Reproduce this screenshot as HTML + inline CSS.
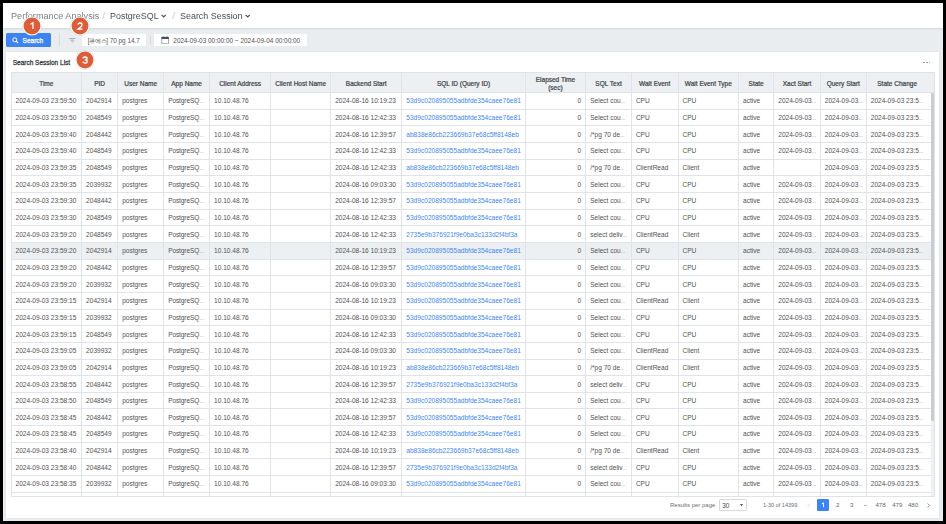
<!DOCTYPE html><html><head><meta charset="utf-8"><style>
*{margin:0;padding:0;box-sizing:border-box}
html,body{width:946px;height:524px;overflow:hidden;background:#000}
body{position:relative;font-family:"Liberation Sans",sans-serif;color:#444}
.a{position:absolute;white-space:nowrap}
#frame{position:absolute;left:3px;top:3px;width:940px;height:518px;background:#e9edf0;overflow:hidden}
#hdr{position:absolute;left:3px;top:3px;width:940px;height:24.8px;background:#fff;box-shadow:0 0.8px 2px rgba(0,0,0,.09)}
.bc{font-size:9.7px;top:10.6px;line-height:10px;transform-origin:0 50%}
.btn{left:6px;top:33.2px;width:45px;height:13.9px;background:#3e84f0;border-radius:1.5px;color:#fff}
.inp{background:#fff;border-radius:1px}
#card{position:absolute;left:5.7px;top:51.5px;width:933.7px;height:466.2px;background:#fff;box-shadow:0 0 1px rgba(0,0,0,.12)}
.hl{background:#e0e3e7}
.th{background:#edf0f3}
.ht{font-size:6.5px;color:#3a3d42;text-align:center;line-height:7.6px;-webkit-text-stroke:0.2px #3a3d42}
.td{font-size:6.55px;color:#525252;line-height:8px}
.el{font-size:4.6px;letter-spacing:-0.2px}
.lk{color:#4187ef;font-size:6.58px}
.badge{width:19.6px;height:19.6px;border-radius:50%;background:#db5e3b;background-clip:padding-box;border:1.5px solid #fff;box-shadow:0.4px 0.7px 1.3px rgba(0,0,0,.3);color:#fff;font-weight:bold;font-size:10.2px;text-align:center;line-height:19.2px}
</style></head><body>
<div id="frame"></div>
<div id="hdr"></div>

<div class="a bc" style="left:10.8px;color:#7b8087;transform:scaleX(0.943)">Performance Analysis</div>
<div class="a bc" style="left:102.3px;color:#c3c7cc">/</div>
<div class="a bc" style="left:110.3px;color:#4a4e55;transform:scaleX(0.922)">PostgreSQL</div>
<svg class="a" style="left:161px;top:14.2px" width="5.4" height="4" viewBox="0 0 5.4 4"><path d="M0.6 0.8 L2.7 2.9 L4.8 0.8" fill="none" stroke="#4a4e55" stroke-width="1.15"/></svg>
<div class="a bc" style="left:172.2px;color:#c3c7cc">/</div>
<div class="a bc" style="left:180.3px;color:#4a4e55;transform:scaleX(0.922)">Search Session</div>
<svg class="a" style="left:244.9px;top:14.2px" width="5.4" height="4" viewBox="0 0 5.4 4"><path d="M0.6 0.8 L2.7 2.9 L4.8 0.8" fill="none" stroke="#4a4e55" stroke-width="1.15"/></svg>
<div class="a btn"></div>
<svg class="a" style="left:12px;top:36.6px" width="7" height="7" viewBox="0 0 7 7"><circle cx="2.8" cy="2.8" r="2" fill="none" stroke="#fff" stroke-width="1"/><path d="M4.2 4.2 L6.2 6.2" stroke="#fff" stroke-width="1.1"/></svg>
<div class="a" style="left:22.6px;top:36.8px;font-size:6.5px;color:#fff;line-height:8px;-webkit-text-stroke:0.25px #fff">Search</div>
<div class="a" style="left:58.9px;top:33.2px;width:0.7px;height:12.8px;background:#d9dce0"></div>
<svg class="a" style="left:69px;top:37.8px" width="7" height="5" viewBox="0 0 7 5"><path d="M0.3 0.5H6.5M1.5 2.2H5.3M2.6 3.9H4.2" stroke="#8d9197" stroke-width="0.65"/></svg>
<div class="a inp" style="left:82px;top:34.4px;width:64px;height:11.4px"></div>
<div class="a" style="left:87.8px;top:36.7px;font-size:6.4px;color:#555;line-height:8px"><span style="letter-spacing:-0.3px">[큐에스]</span> 70 pg 14.7</div>
<div class="a" style="left:149.8px;top:36px;width:0.8px;height:8.5px;background:#d6d9dd"></div>
<div class="a inp" style="left:154px;top:34.4px;width:152.7px;height:11.3px"></div>
<svg class="a" style="left:161.4px;top:36.1px" width="8.4" height="8.4" viewBox="0 0 8.4 8.4"><rect x="0.75" y="1.2" width="6.8" height="6.6" rx="0.6" fill="none" stroke="#70747a" stroke-width="0.65"/><rect x="0.45" y="0.9" width="7.4" height="2.1" rx="0.4" fill="#4a4e56"/><path d="M2.2 0.4V1.4M6.1 0.4V1.4" stroke="#4a4e56" stroke-width="0.8"/></svg>
<div class="a" style="left:173.3px;top:37px;font-size:6.45px;color:#505050;line-height:8px">2024-09-03 00:00:00 ~ 2024-09-04 00:00:00</div>
<div id="card"></div>
<div class="a" style="left:12.7px;top:59.2px;font-size:6.5px;color:#3a3d42;line-height:8px;-webkit-text-stroke:0.28px #3a3d42">Search Session List</div>
<div class="a" style="left:923.2px;top:61.65px;width:1.6px;height:1.6px;border-radius:50%;background:#8d939b"></div>
<div class="a" style="left:926.0500000000001px;top:61.65px;width:1.6px;height:1.6px;border-radius:50%;background:#8d939b"></div>
<div class="a" style="left:928.9000000000001px;top:61.65px;width:1.6px;height:1.6px;border-radius:50%;background:#8d939b"></div>
<div class="a th" style="left:11px;top:72.1px;width:923px;height:20.400000000000006px"></div>
<div class="a th" style="left:11px;top:242.35px;width:923px;height:16.65px"></div>
<div class="a hl" style="left:11px;top:72.1px;width:923px;height:0.8px"></div>
<div class="a hl" style="left:11px;top:92.1px;width:923px;height:0.8px"></div>
<div class="a hl" style="left:11px;top:108.75px;width:923px;height:0.8px"></div>
<div class="a hl" style="left:11px;top:125.40px;width:923px;height:0.8px"></div>
<div class="a hl" style="left:11px;top:142.05px;width:923px;height:0.8px"></div>
<div class="a hl" style="left:11px;top:158.70px;width:923px;height:0.8px"></div>
<div class="a hl" style="left:11px;top:175.35px;width:923px;height:0.8px"></div>
<div class="a hl" style="left:11px;top:192.00px;width:923px;height:0.8px"></div>
<div class="a hl" style="left:11px;top:208.65px;width:923px;height:0.8px"></div>
<div class="a hl" style="left:11px;top:225.30px;width:923px;height:0.8px"></div>
<div class="a hl" style="left:11px;top:241.95px;width:923px;height:0.8px"></div>
<div class="a hl" style="left:11px;top:258.60px;width:923px;height:0.8px"></div>
<div class="a hl" style="left:11px;top:275.25px;width:923px;height:0.8px"></div>
<div class="a hl" style="left:11px;top:291.90px;width:923px;height:0.8px"></div>
<div class="a hl" style="left:11px;top:308.55px;width:923px;height:0.8px"></div>
<div class="a hl" style="left:11px;top:325.20px;width:923px;height:0.8px"></div>
<div class="a hl" style="left:11px;top:341.85px;width:923px;height:0.8px"></div>
<div class="a hl" style="left:11px;top:358.50px;width:923px;height:0.8px"></div>
<div class="a hl" style="left:11px;top:375.15px;width:923px;height:0.8px"></div>
<div class="a hl" style="left:11px;top:391.80px;width:923px;height:0.8px"></div>
<div class="a hl" style="left:11px;top:408.45px;width:923px;height:0.8px"></div>
<div class="a hl" style="left:11px;top:425.10px;width:923px;height:0.8px"></div>
<div class="a hl" style="left:11px;top:441.75px;width:923px;height:0.8px"></div>
<div class="a hl" style="left:11px;top:458.40px;width:923px;height:0.8px"></div>
<div class="a hl" style="left:11px;top:475.05px;width:923px;height:0.8px"></div>
<div class="a hl" style="left:11px;top:491.70px;width:923px;height:0.8px"></div>
<div class="a hl" style="left:11px;top:496.20000000000005px;width:923px;height:0.8px"></div>
<div class="a hl" style="left:10.60px;top:72.1px;width:0.8px;height:424.5px"></div>
<div class="a hl" style="left:81.20px;top:72.1px;width:0.8px;height:424.5px"></div>
<div class="a hl" style="left:117.30px;top:72.1px;width:0.8px;height:424.5px"></div>
<div class="a hl" style="left:163.30px;top:72.1px;width:0.8px;height:424.5px"></div>
<div class="a hl" style="left:209.20px;top:72.1px;width:0.8px;height:424.5px"></div>
<div class="a hl" style="left:270.30px;top:72.1px;width:0.8px;height:424.5px"></div>
<div class="a hl" style="left:330.30px;top:72.1px;width:0.8px;height:424.5px"></div>
<div class="a hl" style="left:401.40px;top:72.1px;width:0.8px;height:424.5px"></div>
<div class="a hl" style="left:524.80px;top:72.1px;width:0.8px;height:424.5px"></div>
<div class="a hl" style="left:585.30px;top:72.1px;width:0.8px;height:424.5px"></div>
<div class="a hl" style="left:631.00px;top:72.1px;width:0.8px;height:424.5px"></div>
<div class="a hl" style="left:677.60px;top:72.1px;width:0.8px;height:424.5px"></div>
<div class="a hl" style="left:738.20px;top:72.1px;width:0.8px;height:424.5px"></div>
<div class="a hl" style="left:773.35px;top:72.1px;width:0.8px;height:424.5px"></div>
<div class="a hl" style="left:819.90px;top:72.1px;width:0.8px;height:424.5px"></div>
<div class="a hl" style="left:865.90px;top:72.1px;width:0.8px;height:424.5px"></div>
<div class="a hl" style="left:933.60px;top:72.1px;width:0.8px;height:424.5px"></div>
<div class="a ht" style="left:11px;top:79.80px;width:70.6px">Time</div>
<div class="a ht" style="left:81.6px;top:79.80px;width:36.10000000000001px">PID</div>
<div class="a ht" style="left:117.7px;top:79.80px;width:45.999999999999986px">User Name</div>
<div class="a ht" style="left:163.7px;top:79.80px;width:45.900000000000006px">App Name</div>
<div class="a ht" style="left:209.6px;top:79.80px;width:61.099999999999994px">Client Address</div>
<div class="a ht" style="left:270.7px;top:79.80px;width:60.0px">Client Host Name</div>
<div class="a ht" style="left:330.7px;top:79.80px;width:71.10000000000002px">Backend Start</div>
<div class="a ht" style="left:401.8px;top:79.80px;width:123.40000000000003px">SQL ID (Query ID)</div>
<div class="a ht" style="left:525.2px;top:76.00px;width:60.5px">Elapsed Time<br>(sec)</div>
<div class="a ht" style="left:585.7px;top:79.80px;width:45.69999999999993px">SQL Text</div>
<div class="a ht" style="left:631.4px;top:79.80px;width:46.60000000000002px">Wait Event</div>
<div class="a ht" style="left:678px;top:79.80px;width:60.60000000000002px">Wait Event Type</div>
<div class="a ht" style="left:738.6px;top:79.80px;width:35.14999999999998px">State</div>
<div class="a ht" style="left:773.75px;top:79.80px;width:46.549999999999955px">Xact Start</div>
<div class="a ht" style="left:820.3px;top:79.80px;width:46.0px">Query Start</div>
<div class="a ht" style="left:866.3px;top:79.80px;width:61.700000000000045px">State Change</div>
<div class="a td" style="left:15.5px;top:97.48px">2024-09-03 23:59:50</div>
<div class="a td" style="left:86.1px;top:97.48px">2042914</div>
<div class="a td" style="left:122.2px;top:97.48px">postgres</div>
<div class="a td" style="left:168.2px;top:97.48px;letter-spacing:-0.12px">PostgreSQ<span class="el">…</span></div>
<div class="a td" style="left:214.1px;top:97.48px">10.10.48.76</div>
<div class="a td" style="left:335.2px;top:97.48px">2024-08-16 10:19:23</div>
<div class="a td lk" style="left:406.3px;top:97.48px">53d9c020895055adbfde354caee76e81</div>
<div class="a td" style="left:525.2px;top:97.48px;width:56.0px;text-align:right">0</div>
<div class="a td" style="left:590.2px;top:97.48px">Select cou<span class="el">…</span></div>
<div class="a td" style="left:635.9px;top:97.48px">CPU</div>
<div class="a td" style="left:682.5px;top:97.48px">CPU</div>
<div class="a td" style="left:743.1px;top:97.48px">active</div>
<div class="a td" style="left:778.25px;top:97.48px">2024-09-03<span class="el">…</span></div>
<div class="a td" style="left:824.8px;top:97.48px">2024-09-03<span class="el">…</span></div>
<div class="a td" style="left:870.8px;top:97.48px">2024-09-03 23:5<span class="el">…</span></div>
<div class="a td" style="left:15.5px;top:114.13px">2024-09-03 23:59:50</div>
<div class="a td" style="left:86.1px;top:114.13px">2048549</div>
<div class="a td" style="left:122.2px;top:114.13px">postgres</div>
<div class="a td" style="left:168.2px;top:114.13px;letter-spacing:-0.12px">PostgreSQ<span class="el">…</span></div>
<div class="a td" style="left:214.1px;top:114.13px">10.10.48.76</div>
<div class="a td" style="left:335.2px;top:114.13px">2024-08-16 12:42:33</div>
<div class="a td lk" style="left:406.3px;top:114.13px">53d9c020895055adbfde354caee76e81</div>
<div class="a td" style="left:525.2px;top:114.13px;width:56.0px;text-align:right">0</div>
<div class="a td" style="left:590.2px;top:114.13px">Select cou<span class="el">…</span></div>
<div class="a td" style="left:635.9px;top:114.13px">CPU</div>
<div class="a td" style="left:682.5px;top:114.13px">CPU</div>
<div class="a td" style="left:743.1px;top:114.13px">active</div>
<div class="a td" style="left:778.25px;top:114.13px">2024-09-03<span class="el">…</span></div>
<div class="a td" style="left:824.8px;top:114.13px">2024-09-03<span class="el">…</span></div>
<div class="a td" style="left:870.8px;top:114.13px">2024-09-03 23:5<span class="el">…</span></div>
<div class="a td" style="left:15.5px;top:130.78px">2024-09-03 23:59:40</div>
<div class="a td" style="left:86.1px;top:130.78px">2048442</div>
<div class="a td" style="left:122.2px;top:130.78px">postgres</div>
<div class="a td" style="left:168.2px;top:130.78px;letter-spacing:-0.12px">PostgreSQ<span class="el">…</span></div>
<div class="a td" style="left:214.1px;top:130.78px">10.10.48.76</div>
<div class="a td" style="left:335.2px;top:130.78px">2024-08-16 12:39:57</div>
<div class="a td lk" style="left:406.3px;top:130.78px">ab838e86cb223669b37e68c5ff8148eb</div>
<div class="a td" style="left:525.2px;top:130.78px;width:56.0px;text-align:right">0</div>
<div class="a td" style="left:590.2px;top:130.78px">/*pg 70 de<span class="el">…</span></div>
<div class="a td" style="left:635.9px;top:130.78px">CPU</div>
<div class="a td" style="left:682.5px;top:130.78px">CPU</div>
<div class="a td" style="left:743.1px;top:130.78px">active</div>
<div class="a td" style="left:778.25px;top:130.78px">2024-09-03<span class="el">…</span></div>
<div class="a td" style="left:824.8px;top:130.78px">2024-09-03<span class="el">…</span></div>
<div class="a td" style="left:870.8px;top:130.78px">2024-09-03 23:5<span class="el">…</span></div>
<div class="a td" style="left:15.5px;top:147.42px">2024-09-03 23:59:40</div>
<div class="a td" style="left:86.1px;top:147.42px">2048549</div>
<div class="a td" style="left:122.2px;top:147.42px">postgres</div>
<div class="a td" style="left:168.2px;top:147.42px;letter-spacing:-0.12px">PostgreSQ<span class="el">…</span></div>
<div class="a td" style="left:214.1px;top:147.42px">10.10.48.76</div>
<div class="a td" style="left:335.2px;top:147.42px">2024-08-16 12:42:33</div>
<div class="a td lk" style="left:406.3px;top:147.42px">53d9c020895055adbfde354caee76e81</div>
<div class="a td" style="left:525.2px;top:147.42px;width:56.0px;text-align:right">0</div>
<div class="a td" style="left:590.2px;top:147.42px">Select cou<span class="el">…</span></div>
<div class="a td" style="left:635.9px;top:147.42px">CPU</div>
<div class="a td" style="left:682.5px;top:147.42px">CPU</div>
<div class="a td" style="left:743.1px;top:147.42px">active</div>
<div class="a td" style="left:778.25px;top:147.42px">2024-09-03<span class="el">…</span></div>
<div class="a td" style="left:824.8px;top:147.42px">2024-09-03<span class="el">…</span></div>
<div class="a td" style="left:870.8px;top:147.42px">2024-09-03 23:5<span class="el">…</span></div>
<div class="a td" style="left:15.5px;top:164.07px">2024-09-03 23:59:35</div>
<div class="a td" style="left:86.1px;top:164.07px">2048549</div>
<div class="a td" style="left:122.2px;top:164.07px">postgres</div>
<div class="a td" style="left:168.2px;top:164.07px;letter-spacing:-0.12px">PostgreSQ<span class="el">…</span></div>
<div class="a td" style="left:214.1px;top:164.07px">10.10.48.76</div>
<div class="a td" style="left:335.2px;top:164.07px">2024-08-16 12:42:33</div>
<div class="a td lk" style="left:406.3px;top:164.07px">ab838e86cb223669b37e68c5ff8148eb</div>
<div class="a td" style="left:525.2px;top:164.07px;width:56.0px;text-align:right">0</div>
<div class="a td" style="left:590.2px;top:164.07px">/*pg 70 de<span class="el">…</span></div>
<div class="a td" style="left:635.9px;top:164.07px">ClientRead</div>
<div class="a td" style="left:682.5px;top:164.07px">Client</div>
<div class="a td" style="left:743.1px;top:164.07px">active</div>
<div class="a td" style="left:824.8px;top:164.07px">2024-09-03<span class="el">…</span></div>
<div class="a td" style="left:870.8px;top:164.07px">2024-09-03 23:5<span class="el">…</span></div>
<div class="a td" style="left:15.5px;top:180.72px">2024-09-03 23:59:35</div>
<div class="a td" style="left:86.1px;top:180.72px">2039932</div>
<div class="a td" style="left:122.2px;top:180.72px">postgres</div>
<div class="a td" style="left:168.2px;top:180.72px;letter-spacing:-0.12px">PostgreSQ<span class="el">…</span></div>
<div class="a td" style="left:214.1px;top:180.72px">10.10.48.76</div>
<div class="a td" style="left:335.2px;top:180.72px">2024-08-16 09:03:30</div>
<div class="a td lk" style="left:406.3px;top:180.72px">53d9c020895055adbfde354caee76e81</div>
<div class="a td" style="left:525.2px;top:180.72px;width:56.0px;text-align:right">0</div>
<div class="a td" style="left:590.2px;top:180.72px">Select cou<span class="el">…</span></div>
<div class="a td" style="left:635.9px;top:180.72px">CPU</div>
<div class="a td" style="left:682.5px;top:180.72px">CPU</div>
<div class="a td" style="left:743.1px;top:180.72px">active</div>
<div class="a td" style="left:778.25px;top:180.72px">2024-09-03<span class="el">…</span></div>
<div class="a td" style="left:824.8px;top:180.72px">2024-09-03<span class="el">…</span></div>
<div class="a td" style="left:870.8px;top:180.72px">2024-09-03 23:5<span class="el">…</span></div>
<div class="a td" style="left:15.5px;top:197.37px">2024-09-03 23:59:30</div>
<div class="a td" style="left:86.1px;top:197.37px">2048442</div>
<div class="a td" style="left:122.2px;top:197.37px">postgres</div>
<div class="a td" style="left:168.2px;top:197.37px;letter-spacing:-0.12px">PostgreSQ<span class="el">…</span></div>
<div class="a td" style="left:214.1px;top:197.37px">10.10.48.76</div>
<div class="a td" style="left:335.2px;top:197.37px">2024-08-16 12:39:57</div>
<div class="a td lk" style="left:406.3px;top:197.37px">53d9c020895055adbfde354caee76e81</div>
<div class="a td" style="left:525.2px;top:197.37px;width:56.0px;text-align:right">0</div>
<div class="a td" style="left:590.2px;top:197.37px">Select cou<span class="el">…</span></div>
<div class="a td" style="left:635.9px;top:197.37px">CPU</div>
<div class="a td" style="left:682.5px;top:197.37px">CPU</div>
<div class="a td" style="left:743.1px;top:197.37px">active</div>
<div class="a td" style="left:778.25px;top:197.37px">2024-09-03<span class="el">…</span></div>
<div class="a td" style="left:824.8px;top:197.37px">2024-09-03<span class="el">…</span></div>
<div class="a td" style="left:870.8px;top:197.37px">2024-09-03 23:5<span class="el">…</span></div>
<div class="a td" style="left:15.5px;top:214.02px">2024-09-03 23:59:30</div>
<div class="a td" style="left:86.1px;top:214.02px">2048549</div>
<div class="a td" style="left:122.2px;top:214.02px">postgres</div>
<div class="a td" style="left:168.2px;top:214.02px;letter-spacing:-0.12px">PostgreSQ<span class="el">…</span></div>
<div class="a td" style="left:214.1px;top:214.02px">10.10.48.76</div>
<div class="a td" style="left:335.2px;top:214.02px">2024-08-16 12:42:33</div>
<div class="a td lk" style="left:406.3px;top:214.02px">53d9c020895055adbfde354caee76e81</div>
<div class="a td" style="left:525.2px;top:214.02px;width:56.0px;text-align:right">0</div>
<div class="a td" style="left:590.2px;top:214.02px">Select cou<span class="el">…</span></div>
<div class="a td" style="left:635.9px;top:214.02px">CPU</div>
<div class="a td" style="left:682.5px;top:214.02px">CPU</div>
<div class="a td" style="left:743.1px;top:214.02px">active</div>
<div class="a td" style="left:778.25px;top:214.02px">2024-09-03<span class="el">…</span></div>
<div class="a td" style="left:824.8px;top:214.02px">2024-09-03<span class="el">…</span></div>
<div class="a td" style="left:870.8px;top:214.02px">2024-09-03 23:5<span class="el">…</span></div>
<div class="a td" style="left:15.5px;top:230.67px">2024-09-03 23:59:20</div>
<div class="a td" style="left:86.1px;top:230.67px">2048549</div>
<div class="a td" style="left:122.2px;top:230.67px">postgres</div>
<div class="a td" style="left:168.2px;top:230.67px;letter-spacing:-0.12px">PostgreSQ<span class="el">…</span></div>
<div class="a td" style="left:214.1px;top:230.67px">10.10.48.76</div>
<div class="a td" style="left:335.2px;top:230.67px">2024-08-16 12:42:33</div>
<div class="a td lk" style="left:406.3px;top:230.67px">2735e9b376921f9e0ba3c133d2f4bf3a</div>
<div class="a td" style="left:525.2px;top:230.67px;width:56.0px;text-align:right">0</div>
<div class="a td" style="left:590.2px;top:230.67px">select deliv<span class="el">…</span></div>
<div class="a td" style="left:635.9px;top:230.67px">ClientRead</div>
<div class="a td" style="left:682.5px;top:230.67px">Client</div>
<div class="a td" style="left:743.1px;top:230.67px">active</div>
<div class="a td" style="left:778.25px;top:230.67px">2024-09-03<span class="el">…</span></div>
<div class="a td" style="left:824.8px;top:230.67px">2024-09-03<span class="el">…</span></div>
<div class="a td" style="left:870.8px;top:230.67px">2024-09-03 23:5<span class="el">…</span></div>
<div class="a td" style="left:15.5px;top:247.32px">2024-09-03 23:59:20</div>
<div class="a td" style="left:86.1px;top:247.32px">2042914</div>
<div class="a td" style="left:122.2px;top:247.32px">postgres</div>
<div class="a td" style="left:168.2px;top:247.32px;letter-spacing:-0.12px">PostgreSQ<span class="el">…</span></div>
<div class="a td" style="left:214.1px;top:247.32px">10.10.48.76</div>
<div class="a td" style="left:335.2px;top:247.32px">2024-08-16 10:19:23</div>
<div class="a td lk" style="left:406.3px;top:247.32px">53d9c020895055adbfde354caee76e81</div>
<div class="a td" style="left:525.2px;top:247.32px;width:56.0px;text-align:right">0</div>
<div class="a td" style="left:590.2px;top:247.32px">Select cou<span class="el">…</span></div>
<div class="a td" style="left:635.9px;top:247.32px">CPU</div>
<div class="a td" style="left:682.5px;top:247.32px">CPU</div>
<div class="a td" style="left:743.1px;top:247.32px">active</div>
<div class="a td" style="left:778.25px;top:247.32px">2024-09-03<span class="el">…</span></div>
<div class="a td" style="left:824.8px;top:247.32px">2024-09-03<span class="el">…</span></div>
<div class="a td" style="left:870.8px;top:247.32px">2024-09-03 23:5<span class="el">…</span></div>
<div class="a td" style="left:15.5px;top:263.97px">2024-09-03 23:59:20</div>
<div class="a td" style="left:86.1px;top:263.97px">2048442</div>
<div class="a td" style="left:122.2px;top:263.97px">postgres</div>
<div class="a td" style="left:168.2px;top:263.97px;letter-spacing:-0.12px">PostgreSQ<span class="el">…</span></div>
<div class="a td" style="left:214.1px;top:263.97px">10.10.48.76</div>
<div class="a td" style="left:335.2px;top:263.97px">2024-08-16 12:39:57</div>
<div class="a td lk" style="left:406.3px;top:263.97px">53d9c020895055adbfde354caee76e81</div>
<div class="a td" style="left:525.2px;top:263.97px;width:56.0px;text-align:right">0</div>
<div class="a td" style="left:590.2px;top:263.97px">Select cou<span class="el">…</span></div>
<div class="a td" style="left:635.9px;top:263.97px">CPU</div>
<div class="a td" style="left:682.5px;top:263.97px">CPU</div>
<div class="a td" style="left:743.1px;top:263.97px">active</div>
<div class="a td" style="left:778.25px;top:263.97px">2024-09-03<span class="el">…</span></div>
<div class="a td" style="left:824.8px;top:263.97px">2024-09-03<span class="el">…</span></div>
<div class="a td" style="left:870.8px;top:263.97px">2024-09-03 23:5<span class="el">…</span></div>
<div class="a td" style="left:15.5px;top:280.62px">2024-09-03 23:59:20</div>
<div class="a td" style="left:86.1px;top:280.62px">2039932</div>
<div class="a td" style="left:122.2px;top:280.62px">postgres</div>
<div class="a td" style="left:168.2px;top:280.62px;letter-spacing:-0.12px">PostgreSQ<span class="el">…</span></div>
<div class="a td" style="left:214.1px;top:280.62px">10.10.48.76</div>
<div class="a td" style="left:335.2px;top:280.62px">2024-08-16 09:03:30</div>
<div class="a td lk" style="left:406.3px;top:280.62px">53d9c020895055adbfde354caee76e81</div>
<div class="a td" style="left:525.2px;top:280.62px;width:56.0px;text-align:right">0</div>
<div class="a td" style="left:590.2px;top:280.62px">Select cou<span class="el">…</span></div>
<div class="a td" style="left:635.9px;top:280.62px">CPU</div>
<div class="a td" style="left:682.5px;top:280.62px">CPU</div>
<div class="a td" style="left:743.1px;top:280.62px">active</div>
<div class="a td" style="left:778.25px;top:280.62px">2024-09-03<span class="el">…</span></div>
<div class="a td" style="left:824.8px;top:280.62px">2024-09-03<span class="el">…</span></div>
<div class="a td" style="left:870.8px;top:280.62px">2024-09-03 23:5<span class="el">…</span></div>
<div class="a td" style="left:15.5px;top:297.27px">2024-09-03 23:59:15</div>
<div class="a td" style="left:86.1px;top:297.27px">2042914</div>
<div class="a td" style="left:122.2px;top:297.27px">postgres</div>
<div class="a td" style="left:168.2px;top:297.27px;letter-spacing:-0.12px">PostgreSQ<span class="el">…</span></div>
<div class="a td" style="left:214.1px;top:297.27px">10.10.48.76</div>
<div class="a td" style="left:335.2px;top:297.27px">2024-08-16 10:19:23</div>
<div class="a td lk" style="left:406.3px;top:297.27px">53d9c020895055adbfde354caee76e81</div>
<div class="a td" style="left:525.2px;top:297.27px;width:56.0px;text-align:right">0</div>
<div class="a td" style="left:590.2px;top:297.27px">Select cou<span class="el">…</span></div>
<div class="a td" style="left:635.9px;top:297.27px">ClientRead</div>
<div class="a td" style="left:682.5px;top:297.27px">Client</div>
<div class="a td" style="left:743.1px;top:297.27px">active</div>
<div class="a td" style="left:778.25px;top:297.27px">2024-09-03<span class="el">…</span></div>
<div class="a td" style="left:824.8px;top:297.27px">2024-09-03<span class="el">…</span></div>
<div class="a td" style="left:870.8px;top:297.27px">2024-09-03 23:5<span class="el">…</span></div>
<div class="a td" style="left:15.5px;top:313.92px">2024-09-03 23:59:15</div>
<div class="a td" style="left:86.1px;top:313.92px">2039932</div>
<div class="a td" style="left:122.2px;top:313.92px">postgres</div>
<div class="a td" style="left:168.2px;top:313.92px;letter-spacing:-0.12px">PostgreSQ<span class="el">…</span></div>
<div class="a td" style="left:214.1px;top:313.92px">10.10.48.76</div>
<div class="a td" style="left:335.2px;top:313.92px">2024-08-16 09:03:30</div>
<div class="a td lk" style="left:406.3px;top:313.92px">53d9c020895055adbfde354caee76e81</div>
<div class="a td" style="left:525.2px;top:313.92px;width:56.0px;text-align:right">0</div>
<div class="a td" style="left:590.2px;top:313.92px">Select cou<span class="el">…</span></div>
<div class="a td" style="left:635.9px;top:313.92px">CPU</div>
<div class="a td" style="left:682.5px;top:313.92px">CPU</div>
<div class="a td" style="left:743.1px;top:313.92px">active</div>
<div class="a td" style="left:778.25px;top:313.92px">2024-09-03<span class="el">…</span></div>
<div class="a td" style="left:824.8px;top:313.92px">2024-09-03<span class="el">…</span></div>
<div class="a td" style="left:870.8px;top:313.92px">2024-09-03 23:5<span class="el">…</span></div>
<div class="a td" style="left:15.5px;top:330.57px">2024-09-03 23:59:15</div>
<div class="a td" style="left:86.1px;top:330.57px">2048549</div>
<div class="a td" style="left:122.2px;top:330.57px">postgres</div>
<div class="a td" style="left:168.2px;top:330.57px;letter-spacing:-0.12px">PostgreSQ<span class="el">…</span></div>
<div class="a td" style="left:214.1px;top:330.57px">10.10.48.76</div>
<div class="a td" style="left:335.2px;top:330.57px">2024-08-16 12:42:33</div>
<div class="a td lk" style="left:406.3px;top:330.57px">53d9c020895055adbfde354caee76e81</div>
<div class="a td" style="left:525.2px;top:330.57px;width:56.0px;text-align:right">0</div>
<div class="a td" style="left:590.2px;top:330.57px">Select cou<span class="el">…</span></div>
<div class="a td" style="left:635.9px;top:330.57px">CPU</div>
<div class="a td" style="left:682.5px;top:330.57px">CPU</div>
<div class="a td" style="left:743.1px;top:330.57px">active</div>
<div class="a td" style="left:778.25px;top:330.57px">2024-09-03<span class="el">…</span></div>
<div class="a td" style="left:824.8px;top:330.57px">2024-09-03<span class="el">…</span></div>
<div class="a td" style="left:870.8px;top:330.57px">2024-09-03 23:5<span class="el">…</span></div>
<div class="a td" style="left:15.5px;top:347.22px">2024-09-03 23:59:05</div>
<div class="a td" style="left:86.1px;top:347.22px">2039932</div>
<div class="a td" style="left:122.2px;top:347.22px">postgres</div>
<div class="a td" style="left:168.2px;top:347.22px;letter-spacing:-0.12px">PostgreSQ<span class="el">…</span></div>
<div class="a td" style="left:214.1px;top:347.22px">10.10.48.76</div>
<div class="a td" style="left:335.2px;top:347.22px">2024-08-16 09:03:30</div>
<div class="a td lk" style="left:406.3px;top:347.22px">53d9c020895055adbfde354caee76e81</div>
<div class="a td" style="left:525.2px;top:347.22px;width:56.0px;text-align:right">0</div>
<div class="a td" style="left:590.2px;top:347.22px">Select cou<span class="el">…</span></div>
<div class="a td" style="left:635.9px;top:347.22px">ClientRead</div>
<div class="a td" style="left:682.5px;top:347.22px">Client</div>
<div class="a td" style="left:743.1px;top:347.22px">active</div>
<div class="a td" style="left:778.25px;top:347.22px">2024-09-03<span class="el">…</span></div>
<div class="a td" style="left:824.8px;top:347.22px">2024-09-03<span class="el">…</span></div>
<div class="a td" style="left:870.8px;top:347.22px">2024-09-03 23:5<span class="el">…</span></div>
<div class="a td" style="left:15.5px;top:363.87px">2024-09-03 23:59:05</div>
<div class="a td" style="left:86.1px;top:363.87px">2042914</div>
<div class="a td" style="left:122.2px;top:363.87px">postgres</div>
<div class="a td" style="left:168.2px;top:363.87px;letter-spacing:-0.12px">PostgreSQ<span class="el">…</span></div>
<div class="a td" style="left:214.1px;top:363.87px">10.10.48.76</div>
<div class="a td" style="left:335.2px;top:363.87px">2024-08-16 10:19:23</div>
<div class="a td lk" style="left:406.3px;top:363.87px">ab838e86cb223669b37e68c5ff8148eb</div>
<div class="a td" style="left:525.2px;top:363.87px;width:56.0px;text-align:right">0</div>
<div class="a td" style="left:590.2px;top:363.87px">/*pg 70 de<span class="el">…</span></div>
<div class="a td" style="left:635.9px;top:363.87px">ClientRead</div>
<div class="a td" style="left:682.5px;top:363.87px">Client</div>
<div class="a td" style="left:743.1px;top:363.87px">active</div>
<div class="a td" style="left:778.25px;top:363.87px">2024-09-03<span class="el">…</span></div>
<div class="a td" style="left:824.8px;top:363.87px">2024-09-03<span class="el">…</span></div>
<div class="a td" style="left:870.8px;top:363.87px">2024-09-03 23:5<span class="el">…</span></div>
<div class="a td" style="left:15.5px;top:380.52px">2024-09-03 23:58:55</div>
<div class="a td" style="left:86.1px;top:380.52px">2048442</div>
<div class="a td" style="left:122.2px;top:380.52px">postgres</div>
<div class="a td" style="left:168.2px;top:380.52px;letter-spacing:-0.12px">PostgreSQ<span class="el">…</span></div>
<div class="a td" style="left:214.1px;top:380.52px">10.10.48.76</div>
<div class="a td" style="left:335.2px;top:380.52px">2024-08-16 12:39:57</div>
<div class="a td lk" style="left:406.3px;top:380.52px">2735e9b376921f9e0ba3c133d2f4bf3a</div>
<div class="a td" style="left:525.2px;top:380.52px;width:56.0px;text-align:right">0</div>
<div class="a td" style="left:590.2px;top:380.52px">select deliv<span class="el">…</span></div>
<div class="a td" style="left:635.9px;top:380.52px">CPU</div>
<div class="a td" style="left:682.5px;top:380.52px">CPU</div>
<div class="a td" style="left:743.1px;top:380.52px">active</div>
<div class="a td" style="left:778.25px;top:380.52px">2024-09-03<span class="el">…</span></div>
<div class="a td" style="left:824.8px;top:380.52px">2024-09-03<span class="el">…</span></div>
<div class="a td" style="left:870.8px;top:380.52px">2024-09-03 23:5<span class="el">…</span></div>
<div class="a td" style="left:15.5px;top:397.17px">2024-09-03 23:58:50</div>
<div class="a td" style="left:86.1px;top:397.17px">2048549</div>
<div class="a td" style="left:122.2px;top:397.17px">postgres</div>
<div class="a td" style="left:168.2px;top:397.17px;letter-spacing:-0.12px">PostgreSQ<span class="el">…</span></div>
<div class="a td" style="left:214.1px;top:397.17px">10.10.48.76</div>
<div class="a td" style="left:335.2px;top:397.17px">2024-08-16 12:42:33</div>
<div class="a td lk" style="left:406.3px;top:397.17px">53d9c020895055adbfde354caee76e81</div>
<div class="a td" style="left:525.2px;top:397.17px;width:56.0px;text-align:right">0</div>
<div class="a td" style="left:590.2px;top:397.17px">Select cou<span class="el">…</span></div>
<div class="a td" style="left:635.9px;top:397.17px">CPU</div>
<div class="a td" style="left:682.5px;top:397.17px">CPU</div>
<div class="a td" style="left:743.1px;top:397.17px">active</div>
<div class="a td" style="left:778.25px;top:397.17px">2024-09-03<span class="el">…</span></div>
<div class="a td" style="left:824.8px;top:397.17px">2024-09-03<span class="el">…</span></div>
<div class="a td" style="left:870.8px;top:397.17px">2024-09-03 23:5<span class="el">…</span></div>
<div class="a td" style="left:15.5px;top:413.82px">2024-09-03 23:58:45</div>
<div class="a td" style="left:86.1px;top:413.82px">2048442</div>
<div class="a td" style="left:122.2px;top:413.82px">postgres</div>
<div class="a td" style="left:168.2px;top:413.82px;letter-spacing:-0.12px">PostgreSQ<span class="el">…</span></div>
<div class="a td" style="left:214.1px;top:413.82px">10.10.48.76</div>
<div class="a td" style="left:335.2px;top:413.82px">2024-08-16 12:39:57</div>
<div class="a td lk" style="left:406.3px;top:413.82px">53d9c020895055adbfde354caee76e81</div>
<div class="a td" style="left:525.2px;top:413.82px;width:56.0px;text-align:right">0</div>
<div class="a td" style="left:590.2px;top:413.82px">Select cou<span class="el">…</span></div>
<div class="a td" style="left:635.9px;top:413.82px">CPU</div>
<div class="a td" style="left:682.5px;top:413.82px">CPU</div>
<div class="a td" style="left:743.1px;top:413.82px">active</div>
<div class="a td" style="left:778.25px;top:413.82px">2024-09-03<span class="el">…</span></div>
<div class="a td" style="left:824.8px;top:413.82px">2024-09-03<span class="el">…</span></div>
<div class="a td" style="left:870.8px;top:413.82px">2024-09-03 23:5<span class="el">…</span></div>
<div class="a td" style="left:15.5px;top:430.47px">2024-09-03 23:58:45</div>
<div class="a td" style="left:86.1px;top:430.47px">2048549</div>
<div class="a td" style="left:122.2px;top:430.47px">postgres</div>
<div class="a td" style="left:168.2px;top:430.47px;letter-spacing:-0.12px">PostgreSQ<span class="el">…</span></div>
<div class="a td" style="left:214.1px;top:430.47px">10.10.48.76</div>
<div class="a td" style="left:335.2px;top:430.47px">2024-08-16 12:42:33</div>
<div class="a td lk" style="left:406.3px;top:430.47px">53d9c020895055adbfde354caee76e81</div>
<div class="a td" style="left:525.2px;top:430.47px;width:56.0px;text-align:right">0</div>
<div class="a td" style="left:590.2px;top:430.47px">Select cou<span class="el">…</span></div>
<div class="a td" style="left:635.9px;top:430.47px">CPU</div>
<div class="a td" style="left:682.5px;top:430.47px">CPU</div>
<div class="a td" style="left:743.1px;top:430.47px">active</div>
<div class="a td" style="left:778.25px;top:430.47px">2024-09-03<span class="el">…</span></div>
<div class="a td" style="left:824.8px;top:430.47px">2024-09-03<span class="el">…</span></div>
<div class="a td" style="left:870.8px;top:430.47px">2024-09-03 23:5<span class="el">…</span></div>
<div class="a td" style="left:15.5px;top:447.12px">2024-09-03 23:58:40</div>
<div class="a td" style="left:86.1px;top:447.12px">2042914</div>
<div class="a td" style="left:122.2px;top:447.12px">postgres</div>
<div class="a td" style="left:168.2px;top:447.12px;letter-spacing:-0.12px">PostgreSQ<span class="el">…</span></div>
<div class="a td" style="left:214.1px;top:447.12px">10.10.48.76</div>
<div class="a td" style="left:335.2px;top:447.12px">2024-08-16 10:19:23</div>
<div class="a td lk" style="left:406.3px;top:447.12px">ab838e86cb223669b37e68c5ff8148eb</div>
<div class="a td" style="left:525.2px;top:447.12px;width:56.0px;text-align:right">0</div>
<div class="a td" style="left:590.2px;top:447.12px">/*pg 70 de<span class="el">…</span></div>
<div class="a td" style="left:635.9px;top:447.12px">ClientRead</div>
<div class="a td" style="left:682.5px;top:447.12px">Client</div>
<div class="a td" style="left:743.1px;top:447.12px">active</div>
<div class="a td" style="left:778.25px;top:447.12px">2024-09-03<span class="el">…</span></div>
<div class="a td" style="left:824.8px;top:447.12px">2024-09-03<span class="el">…</span></div>
<div class="a td" style="left:870.8px;top:447.12px">2024-09-03 23:5<span class="el">…</span></div>
<div class="a td" style="left:15.5px;top:463.77px">2024-09-03 23:58:40</div>
<div class="a td" style="left:86.1px;top:463.77px">2048442</div>
<div class="a td" style="left:122.2px;top:463.77px">postgres</div>
<div class="a td" style="left:168.2px;top:463.77px;letter-spacing:-0.12px">PostgreSQ<span class="el">…</span></div>
<div class="a td" style="left:214.1px;top:463.77px">10.10.48.76</div>
<div class="a td" style="left:335.2px;top:463.77px">2024-08-16 12:39:57</div>
<div class="a td lk" style="left:406.3px;top:463.77px">2735e9b376921f9e0ba3c133d2f4bf3a</div>
<div class="a td" style="left:525.2px;top:463.77px;width:56.0px;text-align:right">0</div>
<div class="a td" style="left:590.2px;top:463.77px">select deliv<span class="el">…</span></div>
<div class="a td" style="left:635.9px;top:463.77px">CPU</div>
<div class="a td" style="left:682.5px;top:463.77px">CPU</div>
<div class="a td" style="left:743.1px;top:463.77px">active</div>
<div class="a td" style="left:778.25px;top:463.77px">2024-09-03<span class="el">…</span></div>
<div class="a td" style="left:824.8px;top:463.77px">2024-09-03<span class="el">…</span></div>
<div class="a td" style="left:870.8px;top:463.77px">2024-09-03 23:5<span class="el">…</span></div>
<div class="a td" style="left:15.5px;top:480.42px">2024-09-03 23:58:35</div>
<div class="a td" style="left:86.1px;top:480.42px">2039932</div>
<div class="a td" style="left:122.2px;top:480.42px">postgres</div>
<div class="a td" style="left:168.2px;top:480.42px;letter-spacing:-0.12px">PostgreSQ<span class="el">…</span></div>
<div class="a td" style="left:214.1px;top:480.42px">10.10.48.76</div>
<div class="a td" style="left:335.2px;top:480.42px">2024-08-16 09:03:30</div>
<div class="a td lk" style="left:406.3px;top:480.42px">53d9c020895055adbfde354caee76e81</div>
<div class="a td" style="left:525.2px;top:480.42px;width:56.0px;text-align:right">0</div>
<div class="a td" style="left:590.2px;top:480.42px">Select cou<span class="el">…</span></div>
<div class="a td" style="left:635.9px;top:480.42px">CPU</div>
<div class="a td" style="left:682.5px;top:480.42px">CPU</div>
<div class="a td" style="left:743.1px;top:480.42px">active</div>
<div class="a td" style="left:778.25px;top:480.42px">2024-09-03<span class="el">…</span></div>
<div class="a td" style="left:824.8px;top:480.42px">2024-09-03<span class="el">…</span></div>
<div class="a td" style="left:870.8px;top:480.42px">2024-09-03 23:5<span class="el">…</span></div>
<div class="a" style="left:930.8px;top:92.9px;width:2.8px;height:403.3px;background:#eef0f2"></div>
<div class="a" style="left:930.8px;top:92.9px;width:2.8px;height:328.0px;background:#c9cdd2;border-radius:1px"></div>
<div class="a" style="left:670px;top:501px;font-size:6px;color:#6a6f75;line-height:8px">Results per page</div>
<div class="a" style="left:718.6px;top:499.4px;width:28px;height:11.9px;border:0.8px solid #d6d9dd;border-radius:1px;background:#fff"></div>
<div class="a" style="left:722.3px;top:502.1px;font-size:6.4px;color:#444;line-height:8px">30</div>
<svg class="a" style="left:739.6px;top:504px" width="3" height="2.5" viewBox="0 0 3 2.5"><path d="M0 0H3L1.5 2.2Z" fill="#555"/></svg>
<div class="a" style="left:763px;top:501px;font-size:5.55px;color:#6a6f75;line-height:8px">1-30 of 14399</div>
<svg class="a" style="left:806.8px;top:502.7px" width="3.5" height="5" viewBox="0 0 3.5 5"><path d="M2.9 0.5 L0.9 2.5 L2.9 4.5" fill="none" stroke="#d3d6da" stroke-width="0.8"/></svg>
<div class="a" style="left:817.2px;top:499.2px;width:11.9px;height:11.9px;background:#3e84f0;border-radius:1px"></div>
<svg class="a" style="left:817.2px;top:499.2px" width="11.9" height="11.9" viewBox="-5.95 -5.95 11.9 11.9"><path d="M-1.1,-1.2 L0.55,-2.05 V2.2" fill="none" stroke="#fff" stroke-width="0.95"/></svg>
<div class="a" style="left:835.9px;top:501.1px;font-size:6.1px;color:#666;line-height:8px">2</div>
<div class="a" style="left:850.1px;top:501.1px;font-size:6.1px;color:#666;line-height:8px">3</div>
<div class="a" style="left:875.4px;top:501.1px;font-size:6.1px;color:#666;line-height:8px">478</div>
<div class="a" style="left:892.2px;top:501.1px;font-size:6.1px;color:#666;line-height:8px">479</div>
<div class="a" style="left:907.9px;top:501.1px;font-size:6.1px;color:#666;line-height:8px">480</div>
<div class="a" style="left:863.9px;top:505.2px;width:3.6px;height:0.6px;background:#b5b8bc"></div>
<svg class="a" style="left:927.3px;top:502.7px" width="3.5" height="5" viewBox="0 0 3.5 5"><path d="M0.6 0.5 L2.6 2.5 L0.6 4.5" fill="none" stroke="#7d8187" stroke-width="0.8"/></svg>
<svg class="a" style="left:20.20px;top:14.20px;filter:drop-shadow(0.35px 0.6px 0.7px rgba(0,0,0,.32))" width="24" height="24" viewBox="-12 -12 24 24"><circle r="9.6" fill="#fff"/><circle r="8.45" fill="#db5e3b"/><path d="M-1.5,-1.75 L0.95,-3.05 V3.1" fill="none" stroke="#fff" stroke-width="1.3"/></svg>
<svg class="a" style="left:68.20px;top:14.00px;filter:drop-shadow(0.35px 0.6px 0.7px rgba(0,0,0,.32))" width="24" height="24" viewBox="-12 -12 24 24"><circle r="9.6" fill="#fff"/><circle r="8.45" fill="#db5e3b"/><path d="M-2.05,-1.25 C-2.05,-2.3 -1.2,-3.0 0.1,-3.0 C1.3,-3.0 2.05,-2.3 2.05,-1.35 C2.05,-0.55 1.65,0.05 1.0,0.75 L-1.95,3.05 H2.45" fill="none" stroke="#fff" stroke-width="1.3"/></svg>
<svg class="a" style="left:72.60px;top:48.30px;filter:drop-shadow(0.35px 0.6px 0.7px rgba(0,0,0,.32))" width="24" height="24" viewBox="-12 -12 24 24"><circle r="9.6" fill="#fff"/><circle r="8.45" fill="#db5e3b"/><path d="M-2.05,-1.6 C-1.95,-2.5 -1.15,-3.0 0,-3.0 C1.25,-3.0 2.05,-2.3 2.05,-1.5 C2.05,-0.6 1.3,-0.1 -0.2,-0.1 M-0.2,-0.1 C1.45,-0.1 2.25,0.6 2.25,1.5 C2.25,2.5 1.4,3.05 0,3.05 C-1.3,3.05 -2.15,2.4 -2.2,1.5" fill="none" stroke="#fff" stroke-width="1.3"/></svg>
</body></html>
